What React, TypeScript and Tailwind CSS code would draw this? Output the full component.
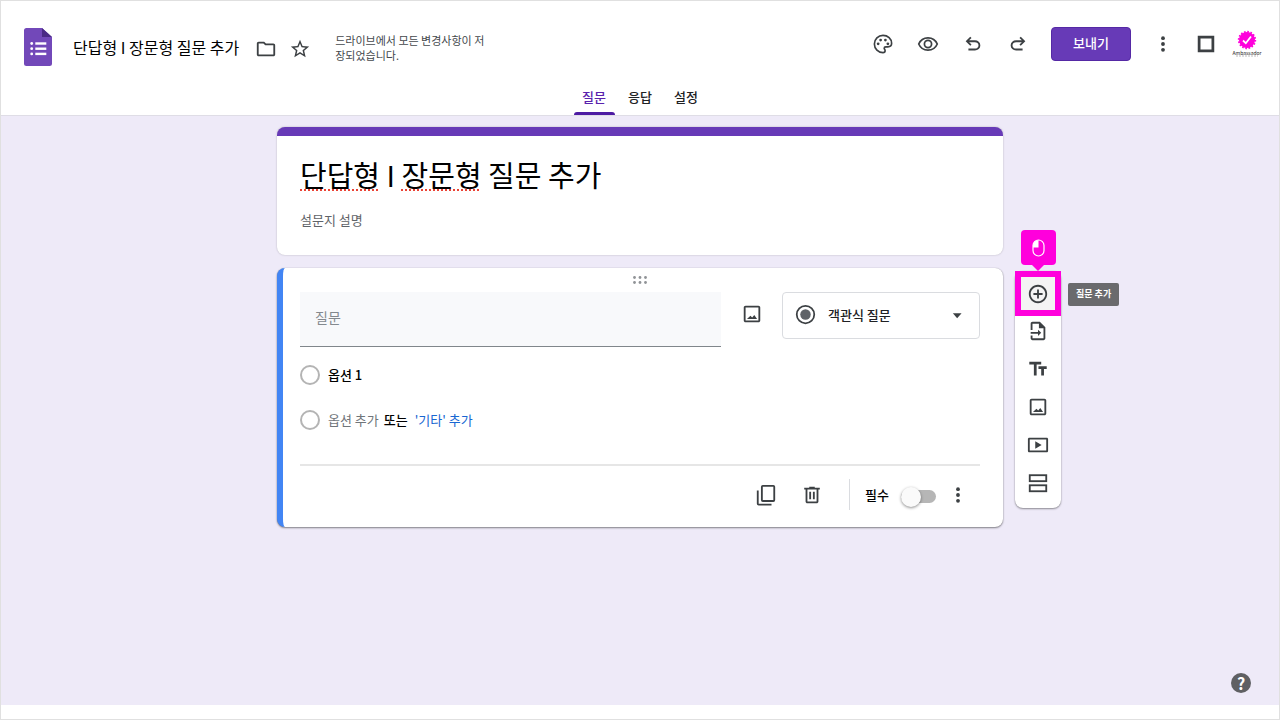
import React, { useState } from 'react';

interface IconProps {
  size?: number;
  className?: string;
  children: React.ReactNode;
}

const Icon: React.FC<IconProps> = ({ size = 24, className = '', children }) => (
  <svg width={size} height={size} viewBox="0 0 24 24" fill="currentColor" className={`shrink-0 ${className}`} aria-hidden="true">{children}</svg>
);

const icons = {
  folder: <path d="M9.17 6l2 2H20v10H4V6h5.17M10 4H4c-1.1 0-1.99.9-1.99 2L2 18c0 1.1.9 2 2 2h16c1.1 0 2-.9 2-2V8c0-1.100-.9-2-2-2h-8l-2-2z" />,
  star: <path d="M22 9.240l-7.190-.62L12 2 9.190 8.630 2 9.240l5.460 4.730L5.820 21 12 17.270 18.180 21l-1.630-7.030L22 9.240zM12 15.400l-3.760 2.270 1-4.280-3.320-2.880 4.380-.38L12 6.100l1.710 4.040 4.380.38-3.320 2.880 1 4.280L12 15.400z" />,
  palette: (
    <>
      <path d="M12 2.600a9.400 9.400 0 1 0 0 18.800c1.500 0 2.300-1 2.300-2.100 0-1.300-1-1.700-1-2.700 0-.9.700-1.500 1.700-1.500h2.300c2.400 0 4.100-1.700 4.100-3.900C21.400 6.300 17.200 2.600 12 2.600z" fill="none" stroke="currentColor" strokeWidth="1.800" />
      <circle cx="6.700" cy="11.800" r="1.500" />
      <circle cx="9.400" cy="7.700" r="1.500" />
      <circle cx="14.600" cy="7.700" r="1.500" />
      <circle cx="17.300" cy="11.800" r="1.500" />
    </>
  ),
  eye: (
    <>
      <path d="M1.900 12C3.700 7.800 7.500 5.300 12 5.300s8.300 2.500 10.100 6.700c-1.800 4.200-5.600 6.700-10.100 6.700S3.700 16.200 1.900 12z" fill="none" stroke="currentColor" strokeWidth="1.900" />
      <circle cx="12" cy="12" r="3.900" fill="none" stroke="currentColor" strokeWidth="1.900" />
    </>
  ),
  undo: <path d="M7 19v-2h7.100q1.575 0 2.737-1T18 13.500q0-1.500-1.163-2.500T14.100 10H7.800l2.600 2.600L9 14 4 9l5-5 1.400 1.400L7.800 8h6.300q2.425 0 4.163 1.575T20 13.500q0 2.350-1.737 3.925T14.100 19z" />,
  more: (
    <>
      <circle cx="12" cy="5" r="2.300" />
      <circle cx="12" cy="12" r="2.300" />
      <circle cx="12" cy="19" r="2.300" />
    </>
  ),
  square: <rect x="4.500" y="4.500" width="15" height="15" fill="none" stroke="currentColor" strokeWidth="3" />,
  image: <path d="M19 5v14H5V5h14m0-2H5c-1.100 0-2 .9-2 2v14c0 1.100.9 2 2 2h14c1.100 0 2-.9 2-2V5c0-1.100-.9-2-2-2zM6.500 17.500h11l-3-4.500-2.300 2.700-1.900-1.700z" />,
  copy: (
    <>
      <rect x="7.500" y="2" width="13.500" height="16.500" rx="1" fill="none" stroke="currentColor" strokeWidth="2" />
      <path d="M2 7h2v14.500h14v2H4a2 2 0 0 1-2-2z" />
    </>
  ),
  trash: <path d="M15 4V3H9v1H3.500v2H5v13c0 1.100.9 2 2 2h10c1.100 0 2-.9 2-2V6h1.500V4H15zm2 15H7V6h10v13zM9 8.500h2v8H9zM13 8.500h2v8h-2z" />,
  add: <path d="M13 7h-2v4H7v2h4v4h2v-4h4v-2h-4V7zm-1-5C6.480 2 2 6.480 2 12s4.480 10 10 10 10-4.480 10-10S17.520 2 12 2zm0 18c-4.410 0-8-3.590-8-8s3.590-8 8-8 8 3.590 8 8-3.590 8-8 8z" />,
  importFile: <path d="M14 2H6c-1.100 0-2 .9-2 2v7h2V4h7v5h5v11H6v-3H4v3c0 1.100.9 2 2 2h12c1.100 0 2-.9 2-2V8l-6-6zm-2 8.500V13H4v2h8v2.500l3.500-3.500z" />,
  text: <path d="M2.500 4v3h5v12h3V7h5V4h-13zm19 5h-9v3h3v7h3v-7h3V9z" />,
  video: <path d="M21.500 4h-19C1.700 4 1 4.700 1 5.500v13c0 .8.700 1.500 1.500 1.500h19c.8 0 1.500-.7 1.500-1.500v-13c0-.8-.7-1.500-1.500-1.500zM21 18H3V6h18v12zM9 8v8l7-4z" />,
  section: (
    <>
      <rect x="3" y="3.500" width="18" height="6.500" fill="none" stroke="currentColor" strokeWidth="2" />
      <rect x="3" y="14.500" width="18" height="6.500" fill="none" stroke="currentColor" strokeWidth="2" />
    </>
  ),
  radio: (
    <>
      <circle cx="12" cy="12" r="10" fill="none" stroke="currentColor" strokeWidth="2" />
      <circle cx="12" cy="12" r="6" className="text-[#5f6368]" fill="currentColor" />
    </>
  ),
};

const tabs = ['질문', '응답', '설정'];

const tools = [
  { label: '질문 가져오기', icon: icons.importFile },
  { label: '제목 및 설명 추가', icon: icons.text },
  { label: '이미지 추가', icon: icons.image },
  { label: '동영상 추가', icon: icons.video },
  { label: '섹션 추가', icon: icons.section },
];

const Header: React.FC = () => {
  const [active, setActive] = useState('질문');

  return (
    <header className="bg-white border-b border-[#dfdde6] h-[115px] flex flex-col justify-between">
      <div className="flex items-start justify-between pl-[23px] pr-4 pt-6">
        <div className="flex items-center h-11">
          <a href="#" aria-label="설문지 홈">
            <svg width="28" height="38" viewBox="0 0 28 38" aria-hidden="true">
              <path d="M2.500 0H18l10 9v26.500a2.500 2.500 0 0 1-2.500 2.500h-23A2.500 2.500 0 0 1 0 35.500v-33A2.500 2.500 0 0 1 2.500 0z" fill="#7248b9" />
              <path d="M18 0l10 9H18z" fill="#4a2a85" />
              <g fill="#fff">
                <circle cx="7.700" cy="15.500" r="1.400" />
                <circle cx="7.700" cy="20.700" r="1.400" />
                <circle cx="7.700" cy="25.900" r="1.400" />
                <rect x="11.300" y="14.300" width="11" height="2.400" />
                <rect x="11.300" y="19.500" width="11" height="2.400" />
                <rect x="11.300" y="24.700" width="11" height="2.400" />
              </g>
            </svg>
          </a>
          <span className="ml-[21px] text-base text-black whitespace-nowrap">단답형 I 장문형 질문 추가</span>
          <button className="ml-4 pt-1" aria-label="폴더로 이동"><Icon size={22}>{icons.folder}</Icon></button>
          <button className="ml-3 pt-1" aria-label="별표"><Icon size={22}>{icons.star}</Icon></button>
          <p className="ml-6 pt-[2px] w-[156px] text-[11px] leading-[15px] text-[#44484c] break-all">드라이브에서 모든 변경사항이 저장되었습니다.</p>
        </div>
        <div className="flex items-center h-[37px]">
          <div className="flex items-center gap-[23px] mr-[22px]">
            <button aria-label="테마 맞춤설정"><Icon size={22}>{icons.palette}</Icon></button>
            <button aria-label="미리보기"><Icon size={22}>{icons.eye}</Icon></button>
            <button aria-label="실행취소"><Icon size={22}>{icons.undo}</Icon></button>
            <button aria-label="재실행"><Icon size={22} className="-scale-x-100">{icons.undo}</Icon></button>
          </div>
          <button className="h-[34px] w-20 pb-[2px] rounded bg-[#673ab7] border border-[#5529a5] text-white text-[13px] font-medium">보내기</button>
          <button className="ml-[22px]" aria-label="더보기"><Icon size={20}>{icons.more}</Icon></button>
          <button className="ml-[22px]" aria-label="앱"><Icon size={22}>{icons.square}</Icon></button>
          <button className="ml-[14px] w-8 flex flex-col items-center" aria-label="계정">
            <svg width="20" height="20" viewBox="0 0 20 20" aria-hidden="true">
              <circle cx="10" cy="10" r="8" fill="#ff00dc" />
              <circle cx="10" cy="10" r="8.200" fill="none" stroke="#ff00dc" strokeWidth="2" strokeDasharray="1.600 1.620" />
              <path d="M6 10.500l2.800 2.700L14 6.500" fill="none" stroke="#fff" strokeWidth="1.800" />
            </svg>
            <span className="text-[5px] leading-[5px] text-[#222]">Ambassador</span>
            <svg width="22" height="2" viewBox="0 0 22 2" aria-hidden="true"><path d="M0 1h22" stroke="#bbb" strokeDasharray="2 1" /></svg>
          </button>
        </div>
      </div>
      <nav className="flex justify-center gap-[5px]">
        {tabs.map(tab => (
          <button key={tab} onClick={() => setActive(tab)} className={`flex flex-col items-center justify-between w-[41px] h-7 text-[13px] leading-5 font-medium ${active === tab ? 'text-[#5a22ad]' : 'text-[#202124]'}`}>
            {tab}
            {active === tab && <span className="w-full h-[3px] rounded-t bg-[#4d1ba3]" />}
          </button>
        ))}
      </nav>
    </header>
  );
};

const QuestionCard: React.FC = () => {
  const [required, setRequired] = useState(false);

  return (
    <section className="bg-white rounded-lg border-l-[6px] border-[#4285f4] shadow-[0_1px_2px_rgba(0,0,0,0.45),0_0_1px_rgba(0,0,0,0.25)] pl-[17px] pr-[23px]">
      <div className="h-6 flex items-center justify-center">
        <svg width="16" height="8" viewBox="0 0 16 8" fill="#909397" aria-hidden="true">
          <circle cx="2.500" cy="1.500" r="1.400" />
          <circle cx="8" cy="1.500" r="1.400" />
          <circle cx="13.500" cy="1.500" r="1.400" />
          <circle cx="2.500" cy="6.500" r="1.400" />
          <circle cx="8" cy="6.500" r="1.400" />
          <circle cx="13.500" cy="6.500" r="1.400" />
        </svg>
      </div>

      <div className="flex items-start">
        <input type="text" aria-label="질문" placeholder="질문" className="flex-1 min-w-0 h-[55px] pl-[15px] pb-1 bg-[#f8f9fb] border-b border-[#80868b] text-sm outline-none placeholder:text-[#84898e]" />
        <button className="w-[61px] h-11 flex items-center justify-center" aria-label="이미지 추가"><Icon size={22}>{icons.image}</Icon></button>
        <div className="relative w-[198px]">
          <select aria-label="질문 유형" className="appearance-none w-full h-[47px] pl-[45px] pb-[2px] bg-white border border-[#dadce0] rounded text-[13px] font-medium text-[#202124] outline-none">
            <option>객관식 질문</option>
            <option>단답형</option>
            <option>장문형</option>
          </select>
          <div className="absolute inset-0 px-[13px] pb-[2px] flex items-center justify-between pointer-events-none">
            <Icon size={21}>{icons.radio}</Icon>
            <Icon size={20}><path d="M7 10h10.500L12.200 16z" /></Icon>
          </div>
        </div>
      </div>

      <div className="pt-[5px] text-[13px]">
        <div className="h-[45px] flex items-center">
          <input type="radio" disabled aria-label="옵션 1" className="appearance-none w-5 h-5 rounded-full border-2 border-[#b4b4b4]" />
          <input type="text" aria-label="옵션 이름" defaultValue="옵션 1" className="ml-2 flex-1 min-w-0 text-black font-medium outline-none" />
        </div>
        <div className="h-[45px] flex items-center">
          <input type="radio" disabled aria-label="새 옵션" className="appearance-none w-5 h-5 rounded-full border-2 border-[#b4b4b4]" />
          <button className="ml-2 text-[#70757a]">옵션 추가</button>
          <span className="ml-[5px] text-black font-medium">또는</span>
          <button className="ml-[7px] text-[#1967d2]">'기타' 추가</button>
        </div>
      </div>

      <div className="mt-[22px] border-t-2 border-[#e6e6e6] h-[63px] pb-1 pr-3 flex items-center justify-end">
        <button aria-label="복사"><Icon size={22}>{icons.copy}</Icon></button>
        <button className="ml-6" aria-label="삭제"><Icon size={22}>{icons.trash}</Icon></button>
        <span className="ml-[26px] w-px h-[31px] bg-[#dadce0]" />
        <label htmlFor="required" className="ml-[15px] text-[13px] text-black font-medium">필수</label>
        <input
          id="required"
          type="checkbox"
          role="switch"
          checked={required}
          onChange={e => setRequired(e.target.checked)}
          className="appearance-none ml-3 mr-3 mt-1 w-[35px] h-[13px] rounded-full bg-[#b6b6b6] flex items-center before:content-[''] before:w-5 before:h-5 before:shrink-0 before:rounded-full before:bg-[#fafafa] before:shadow-[0_1px_3px_rgba(0,0,0,0.45)] checked:justify-end"
        />
        <button aria-label="옵션 더보기"><Icon size={20}>{icons.more}</Icon></button>
      </div>
    </section>
  );
};

const Toolbar: React.FC = () => (
  <div className="relative mt-[144px] ml-3 w-[46px] pb-[2px] bg-white rounded-lg shadow-[0_1px_2px_rgba(0,0,0,0.4),0_0_1px_rgba(0,0,0,0.2)]">
    <button className="w-[46px] h-[45px] flex items-center justify-center bg-[#f4f4f4] border-[6px] border-[#ff00dc]" aria-label="질문 추가">
      <Icon size={22}>{icons.add}</Icon>
    </button>
    {tools.map(t => (
      <button key={t.label} aria-label={t.label} className="w-full h-[38px] flex items-center justify-center pb-[9px]">
        <Icon size={22}>{t.icon}</Icon>
      </button>
    ))}

    {/* click marker and tooltip */}
    <div className="absolute bottom-full left-0 w-full flex flex-col items-center">
      <div className="w-[35px] h-[35px] rounded bg-[#ff00dc] flex items-center justify-center">
        <svg width="13" height="18" viewBox="0 0 13 18" aria-hidden="true">
          <path d="M6.500 1v7.500H1V6.500A5.500 5.500 0 0 1 6.500 1z" fill="#fff" />
          <rect x="1" y="1" width="11" height="16" rx="5.500" fill="none" stroke="#fff" strokeWidth="1.200" />
        </svg>
      </div>
      <svg width="12" height="6" viewBox="0 0 12 6" aria-hidden="true"><path d="M0 0h12L6 6z" fill="#ff00dc" /></svg>
    </div>
    <div role="tooltip" className="absolute left-[53px] top-3 h-[23px] px-2 pb-px flex items-center rounded-xs bg-[#6a6a6d] text-white text-[9px] font-bold whitespace-nowrap">질문 추가</div>
  </div>
);

export default function App() {
  return (
    <div className="min-h-screen flex flex-col bg-white border border-[#e0e0e0] text-[#3c4043] font-['Noto_Sans_CJK_KR',sans-serif]">
      <Header />
      <main className="relative flex-1 mb-[14px] bg-[#eeeaf8] pt-[11px] grid grid-cols-[1fr_minmax(0,726px)_1fr] items-start">
        <div className="col-start-2 flex flex-col gap-[13px]">
          <section className="bg-white rounded-lg border-t-[9px] border-[#673ab7] shadow-[0_0_2px_rgba(0,0,0,0.25)] px-[23px] pt-4 pb-[26px]">
            <h1 className="text-[29px] leading-[44px] text-black">
              <span className="underline decoration-dotted decoration-2 decoration-[#ea4335] underline-offset-2 [text-decoration-skip-ink:none]">단답형</span>
              {' I '}
              <span className="underline decoration-dotted decoration-2 decoration-[#ea4335] underline-offset-2 [text-decoration-skip-ink:none]">장문형</span>
              {' 질문 추가'}
            </h1>
            <input type="text" aria-label="설문지 설명" placeholder="설문지 설명" className="block mt-[13px] w-full h-5 text-[13px] outline-none placeholder:text-[#5f6368]" />
          </section>
          <QuestionCard />
        </div>
        <Toolbar />
        <button className="absolute right-7 bottom-3 w-5 h-5 rounded-full bg-[#5f6063] text-white text-base leading-5 font-bold flex items-center justify-center" aria-label="도움말">?</button>
      </main>
    </div>
  );
}
